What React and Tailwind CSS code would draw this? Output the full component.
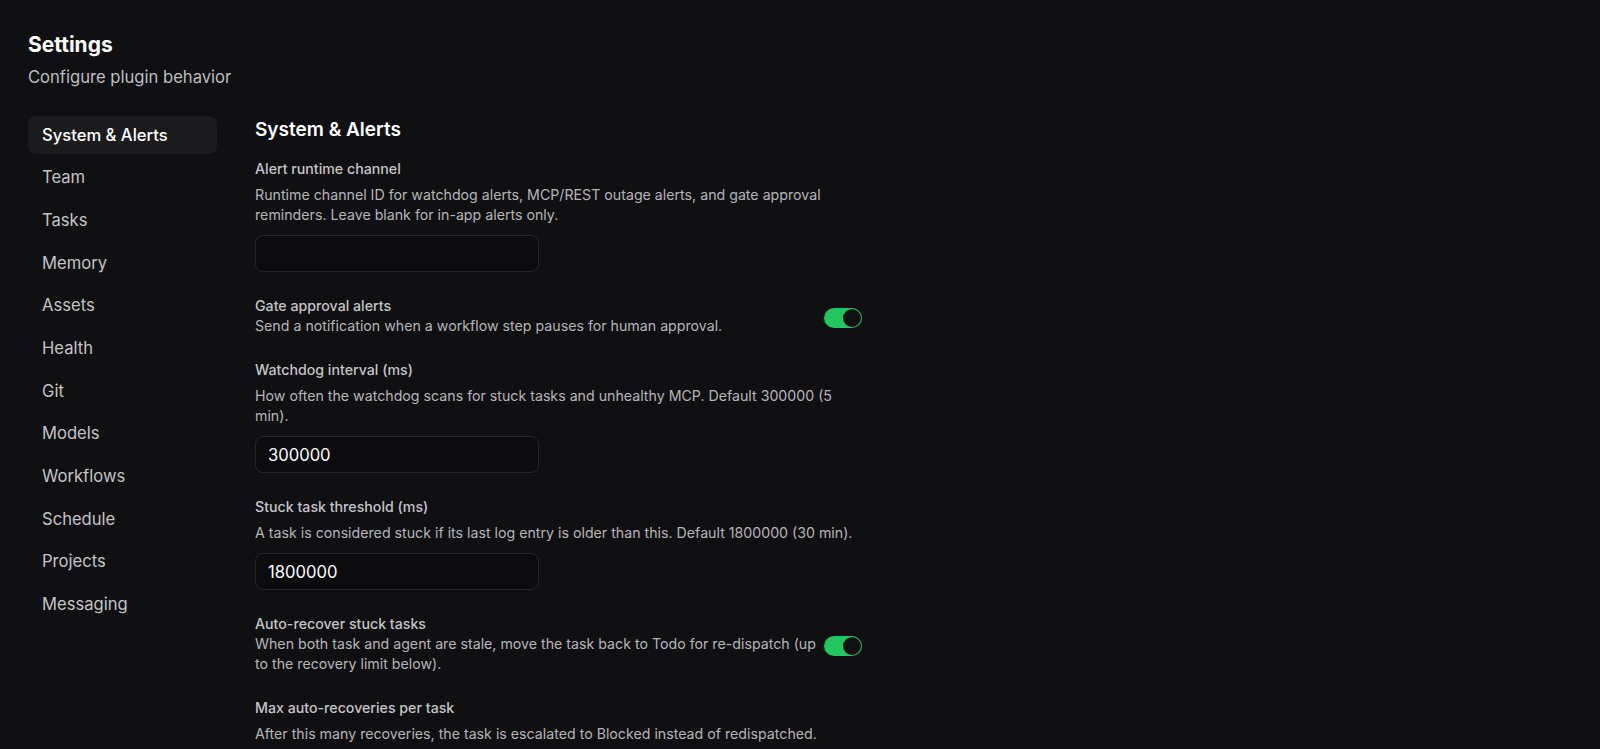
import { useState } from "react";

const sections = [
  "System & Alerts",
  "Team",
  "Tasks",
  "Memory",
  "Assets",
  "Health",
  "Git",
  "Models",
  "Workflows",
  "Schedule",
  "Projects",
  "Messaging",
];

const Toggle = ({ on, onChange }) => (
  <button
    type="button"
    onClick={() => onChange(!on)}
    className={`mt-[3px] flex h-5 w-[38px] shrink-0 items-center rounded-full p-px ${
      on ? "justify-end bg-[#22c55e]" : "justify-start bg-[#3f3f46]"
    }`}
  >
    <span className="block h-[18px] w-[18px] rounded-full bg-[#111113]" />
  </button>
);

const TextField = ({ label, help, value, onChange }) => (
  <div>
    <label className="block text-[14.2px] font-medium leading-5 text-[#c4c4c8]">{label}</label>
    <p className="mt-1.5 text-[14.2px] leading-5 text-[#b5b5b9]">{help}</p>
    <input
      value={value}
      onChange={(e) => onChange(e.target.value)}
      className="mt-2.5 h-[37px] w-[284px] rounded-lg border border-[#27272a] bg-[#0c0c0e] px-3 text-[16.6px] text-white outline-none"
    />
  </div>
);

const ToggleField = ({ label, help, on, onChange }) => (
  <div className="flex items-center gap-[3px]">
    <div className="flex-1">
      <div className="text-[14.2px] font-medium leading-5 text-[#c4c4c8]">{label}</div>
      <p className="text-[14.2px] leading-5 text-[#b5b5b9]">{help}</p>
    </div>
    <Toggle on={on} onChange={onChange} />
  </div>
);

export default function App() {
  const [active, setActive] = useState("System & Alerts");
  const [channel, setChannel] = useState("");
  const [gateAlerts, setGateAlerts] = useState(true);
  const [interval, setInterval] = useState("300000");
  const [threshold, setThreshold] = useState("1800000");
  const [autoRecover, setAutoRecover] = useState(true);

  return (
    <div
      className="min-h-screen bg-[#101012] px-7 pt-[31px] text-white"
      style={{ fontFamily: "Inter, 'Noto Sans', sans-serif" }}
    >
      {/* Header */}
      <h1 className="text-[21px] font-bold leading-7">Settings</h1>
      <p className="mt-1.5 text-[16.6px] leading-6 text-[#bdbdc1]">Configure plugin behavior</p>

      <div className="mt-[27px] flex gap-[38px]">
        {/* Side navigation */}
        <nav className="flex w-[189px] shrink-0 flex-col gap-[4.7px]">
          {sections.map((s) => (
            <button
              key={s}
              type="button"
              onClick={() => setActive(s)}
              className={`flex h-[38px] items-center rounded-lg px-3.5 text-left text-[16.6px] ${
                active === s
                  ? "bg-[#1b1b1e] font-medium text-white"
                  : "text-[#c4c4c8]"
              }`}
            >
              {s}
            </button>
          ))}
        </nav>

        {/* Main panel */}
        <main className="w-[607px]">
          <h2 className="text-[19px] font-semibold leading-7">{active}</h2>
          <div className="mt-[15px] flex flex-col gap-6">
            <TextField
              label="Alert runtime channel"
              help="Runtime channel ID for watchdog alerts, MCP/REST outage alerts, and gate approval reminders. Leave blank for in-app alerts only."
              value={channel}
              onChange={setChannel}
            />
            <ToggleField
              label="Gate approval alerts"
              help="Send a notification when a workflow step pauses for human approval."
              on={gateAlerts}
              onChange={setGateAlerts}
            />
            <TextField
              label="Watchdog interval (ms)"
              help="How often the watchdog scans for stuck tasks and unhealthy MCP. Default 300000 (5 min)."
              value={interval}
              onChange={setInterval}
            />
            <TextField
              label="Stuck task threshold (ms)"
              help="A task is considered stuck if its last log entry is older than this. Default 1800000 (30 min)."
              value={threshold}
              onChange={setThreshold}
            />
            <ToggleField
              label="Auto-recover stuck tasks"
              help="When both task and agent are stale, move the task back to Todo for re-dispatch (up to the recovery limit below)."
              on={autoRecover}
              onChange={setAutoRecover}
            />
            <div>
              <div className="text-[14.2px] font-medium leading-5 text-[#c4c4c8]">Max auto-recoveries per task</div>
              <p className="mt-1.5 text-[14.2px] leading-5 text-[#b5b5b9]">
                After this many recoveries, the task is escalated to Blocked instead of redispatched.
              </p>
            </div>
          </div>
        </main>
      </div>
    </div>
  );
}
